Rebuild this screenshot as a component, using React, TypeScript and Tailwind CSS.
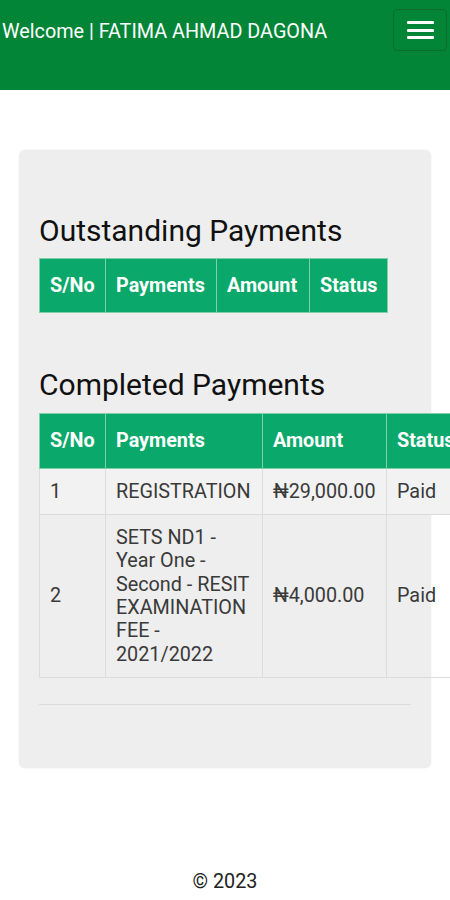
import React from "react";

const th = "bg-[#0aa86a] text-white font-bold text-left px-[10px] py-[15px] border border-[#7fcfa9] leading-[23.3px]";
const td = "px-[10px] py-[11px] border border-[#dcdcdc] leading-[23.3px] text-[#3a3a3a] align-middle";

export default function App() {
  return (
    <div className="w-[450px] min-h-[900px] overflow-hidden bg-white" style={{ fontFamily: "Roboto, 'Liberation Sans', sans-serif" }}>
      <header className="h-[90px] bg-[#038537] flex items-start justify-between">
        <div className="pl-[2px] pt-[20px] text-[19.8px] leading-[24px] text-white">Welcome | FATIMA AHMAD DAGONA</div>
        <button className="mt-[9px] mr-[3px] w-[54px] h-[42px] rounded-[4px] border border-[#0c6a2c] flex flex-col items-center justify-center gap-[4.5px]">
          <span className="block w-[27px] h-[3px] bg-white rounded-[1px]" />
          <span className="block w-[27px] h-[3px] bg-white rounded-[1px]" />
          <span className="block w-[27px] h-[3px] bg-white rounded-[1px]" />
        </button>
      </header>

      <main className="pt-[60px] px-[19px]">
        <div className="w-[412px] bg-[#eeeeee] rounded-[6px] shadow-[0_0_2px_rgba(0,0,0,0.08)] px-[20px] pt-[64px] pb-[63px]">
          <h2 className="text-[30px] leading-[33.6px] text-[#111] font-normal">Outstanding Payments</h2>
          <table className="mt-[10px] border-collapse table-fixed text-[19.8px]" style={{ width: 348 }}>
            <colgroup>
              <col style={{ width: 66 }} />
              <col style={{ width: 111 }} />
              <col style={{ width: 93 }} />
              <col style={{ width: 78 }} />
            </colgroup>
            <thead>
              <tr>
                <th className={th}>S/No</th>
                <th className={th}>Payments</th>
                <th className={th}>Amount</th>
                <th className={th}>Status</th>
              </tr>
            </thead>
          </table>

          <h2 className="mt-[55px] text-[30px] leading-[33.6px] text-[#111] font-normal">Completed Payments</h2>
          <table className="mt-[12px] border-collapse table-fixed text-[19.8px]" style={{ width: 437 }}>
            <colgroup>
              <col style={{ width: 66 }} />
              <col style={{ width: 157 }} />
              <col style={{ width: 124 }} />
              <col style={{ width: 90 }} />
            </colgroup>
            <thead>
              <tr>
                <th className={th}>S/No</th>
                <th className={th}>Payments</th>
                <th className={th}>Amount</th>
                <th className={th}>Status</th>
              </tr>
            </thead>
            <tbody>
              <tr className="bg-[#f2f2f2]">
                <td className={td}>1</td>
                <td className={td}>REGISTRATION</td>
                <td className={td}>₦29,000.00</td>
                <td className={td}>Paid</td>
              </tr>
              <tr>
                <td className={td}>2</td>
                <td className={td}>SETS ND1 - Year One - Second - RESIT EXAMINATION FEE - 2021/2022</td>
                <td className={td}>₦4,000.00</td>
                <td className={td}>Paid</td>
              </tr>
            </tbody>
          </table>

          <hr className="mt-[26px] border-0 border-t border-[#dcdcdc]" />
        </div>
      </main>

      <footer className="pt-[102px] text-center text-[19.8px] leading-[24px] text-[#222]">© 2023</footer>
    </div>
  );
}
